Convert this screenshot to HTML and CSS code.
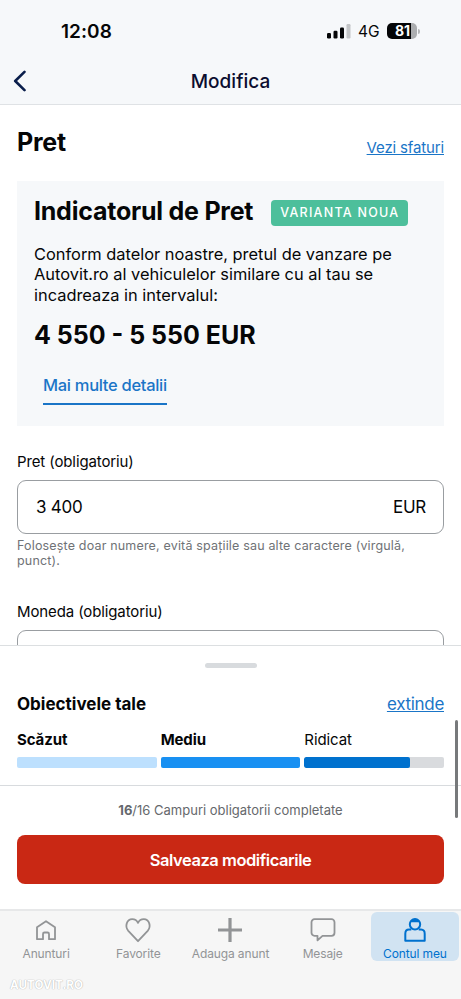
FILE: index.html
```html
<!DOCTYPE html>
<html lang="ro">
<head>
<meta charset="utf-8">
<title>Modifica</title>
<link rel="stylesheet" href="styles.css">
</head>
<body>
<div class="app">
  <header class="top">
    <div class="status">
      <span class="clock">12:08</span>
      <div class="indicators">
        <svg class="signal" width="24" height="16" viewBox="0 0 24 16">
          <rect x="0" y="10" width="4" height="5.5" rx="1.2"/>
          <rect x="6.5" y="7.8" width="4" height="7.7" rx="1.2"/>
          <rect x="13" y="4.5" width="4" height="11" rx="1.2"/>
          <rect class="dim" x="19.5" y="1" width="4" height="14.5" rx="1.2"/>
        </svg>
        <span class="network">4G</span>
        <span class="battery"><span class="level">81</span></span><span class="battery-tip"></span>
      </div>
    </div>
    <div class="navbar">
      <svg class="back" width="14" height="22" viewBox="0 0 14 22"><path d="M11.5 1.8 2.2 11l9.3 9.2"/></svg>
      <h1 class="title">Modifica</h1>
    </div>
  </header>

  <main class="content">
    <div class="section-head">
      <h2 class="heading">Pret</h2>
      <a class="tips">Vezi sfaturi</a>
    </div>
    <section class="card">
      <div class="card-head">
        <h2 class="heading">Indicatorul de Pret</h2>
        <span class="tag">VARIANTA NOUA</span>
      </div>
      <p class="copy">Conform datelor noastre, pretul de vanzare pe<br>Autovit.ro al vehiculelor similare cu al tau se<br>incadreaza in intervalul:</p>
      <p class="range">4 550 - 5 550 EUR</p>
      <a class="details">Mai multe detalii</a>
    </section>
    <div class="field">
      <label class="label">Pret (obligatoriu)</label>
      <div class="input"><span>3 400</span><span>EUR</span></div>
      <p class="hint">Folosește doar numere, evită spațiile sau alte caractere (virgulă,<br>punct).</p>
    </div>
    <div class="field">
      <label class="label">Moneda (obligatoriu)</label>
      <div class="input"></div>
    </div>
  </main>

  <section class="sheet">
    <div class="handle"></div>
    <div class="goals-head">
      <h3 class="goals-title">Obiectivele tale</h3>
      <a class="expand">extinde</a>
    </div>
    <div class="goals">
      <div class="goal"><b>Scăzut</b><div class="bar low"></div></div>
      <div class="goal"><b>Mediu</b><div class="bar mid"></div></div>
      <div class="goal"><span>Ridicat</span><div class="bar rest"><div class="fill" style="width:75.3%"></div></div></div>
    </div>
  </section>

  <section class="submit">
    <p class="count"><b>16</b>/16 Campuri obligatorii completate</p>
    <button class="save">Salveaza modificarile</button>
  </section>

  <nav class="tabs">
    <div class="tab">
      <svg width="28" height="28" viewBox="0 0 28 28"><path d="M5 11.200 14 5.200l9 6v12H17v-5.200a1.500 1.500 0 0 0-1.500-1.500h-3a1.500 1.500 0 0 0-1.500 1.500v5.200H5z"/></svg>
      <span>Anunturi</span>
    </div>
    <div class="tab">
      <svg width="28" height="28" viewBox="0 0 28 28"><path d="M14 25.200 4.300 14.800C.5 10.500 2.700 3.200 8.200 3.200c2.600 0 4.700 1.300 5.800 3.700 1.100-2.400 3.200-3.700 5.800-3.700 5.500 0 7.700 7.300 3.900 11.600z"/></svg>
      <span>Favorite</span>
    </div>
    <div class="tab">
      <svg width="28" height="28" viewBox="0 0 28 28"><path class="thick" d="M14 2v24M2 14h24"/></svg>
      <span>Adauga anunt</span>
    </div>
    <div class="tab">
      <svg width="28" height="28" viewBox="0 0 28 28"><path d="M5.500 3.200h17a3 3 0 0 1 3 3v10.600a3 3 0 0 1-3 3h-9L8.500 24.300v-4.500h-3a3 3 0 0 1-3-3V6.200a3 3 0 0 1 3-3z"/></svg>
      <span>Mesaje</span>
    </div>
    <div class="tab active">
      <svg width="28" height="28" viewBox="0 0 28 28"><path class="hair" d="M8.800 6.200C9.800 4 11.500 2.800 14 2.800s4.200 1.200 5.200 3.400z"/><circle cx="14" cy="8.300" r="5.200"/><path d="M10.300 13.400H8c-2.600 0-3.700 1.900-3.700 4.300v7h19.400v-7c0-2.400-1.100-4.300-3.700-4.300h-2.300"/></svg>
      <span>Contul meu</span>
    </div>
  </nav>
  <div class="scrollbar"></div>
  <div class="brand">AUTOVIT.RO</div>
</div>
</body>
</html>
```
FILE: styles.css
```css
* { box-sizing: border-box; }
body, h1, h2, h3, p { margin: 0; }
body { background: #fff; color: #050607; font-family: Inter, "Liberation Sans", sans-serif; }
.app { position: relative; width: 461px; height: 999px; overflow: hidden; display: flex; flex-direction: column; }

.top { height: 105px; flex: none; background: #f6f8fa; border-bottom: 1px solid #dfe2e5; }
.status { height: 62px; display: flex; align-items: center; justify-content: space-between; padding: 0 41px 0 61px; }
.clock { font-size: 19px; font-weight: 600; letter-spacing: .05px; }
.indicators { display: flex; align-items: center; }
.signal { fill: #050607; }
.signal .dim { fill: #c3c5c7; }
.network { font-size: 15.500px; margin-left: 7px; width: 22px; white-space: nowrap; }
.battery { width: 30px; height: 16px; margin-left: 7px; border-radius: 5px; overflow: hidden; background: linear-gradient(90deg, #050607 81%, #acaeb0 81%); }
.level { display: block; width: 30px; padding-left: 1px; font-size: 14px; font-weight: 700; line-height: 16px; color: #fff; text-align: center; }
.battery-tip { width: 2px; height: 5px; margin-left: 1px; background: #b5b7b9; border-radius: 0 2px 2px 0; }
.navbar { height: 38px; display: grid; grid-template-columns: 34px 1fr 34px; align-items: center; }
.back { margin-left: 13px; fill: none; stroke: #0a1e4b; stroke-width: 2.600; stroke-linecap: round; stroke-linejoin: round; }
.title { text-align: center; font-size: 19px; font-weight: 500; letter-spacing: .05px; color: #0b0d2f; line-height: 24px; padding-top: 1px; }

.content { height: 540px; flex: none; overflow: hidden; padding: 0 17px; }
.section-head { height: 76px; display: flex; justify-content: space-between; align-items: flex-start; padding-top: 22px; }
.heading { font-size: 25px; line-height: 30px; font-weight: 700; white-space: nowrap; letter-spacing: -.23px; }
.tips { margin-top: 11px; font-size: 15px; line-height: 20px; letter-spacing: -.15px; color: #1a75c7; text-decoration: underline; }
.card { height: 245px; background: #f6f8fa; padding: 15px 17px; }
.card-head { display: flex; align-items: center; }
.tag { margin-left: 18px; margin-top: 3px; width: 137px; height: 26px; border-radius: 4px; background: #4dbf9b; color: #fff; font-size: 12.500px; line-height: 26px; letter-spacing: 1.250px; text-align: center; font-weight: 500; white-space: nowrap; }
.copy { margin-top: 18px; font-size: 16.400px; line-height: 20.400px; white-space: nowrap; }
.range { margin-top: 14px; font-size: 25px; line-height: 32px; font-weight: 700; white-space: nowrap; letter-spacing: 0; }
.details { display: inline-block; margin: 21px 0 0 9px; height: 33px; border-bottom: 2px solid #1a75c7; color: #1a75c7; font-size: 16.500px; line-height: 26px; font-weight: 500; letter-spacing: -.3px; white-space: nowrap; }
.field { margin-top: 26px; height: 124px; }
.label { display: block; font-size: 15px; line-height: 20px; letter-spacing: -.12px; }
.input { height: 54px; margin-top: 8px; border: 1px solid #999da1; border-radius: 9px; padding: 0 17px 0 18px; display: flex; align-items: center; justify-content: space-between; font-size: 17px; letter-spacing: -.25px; }
.hint { margin-top: 4px; font-size: 12.500px; line-height: 15px; letter-spacing: .17px; color: #6f7276; white-space: nowrap; }

.sheet { height: 140px; flex: none; border-top: 1px solid #dcdfe1; padding: 17px 17px 0; background: #fff; }
.handle { width: 52px; height: 5px; margin: 0 auto; border-radius: 3px; background: #d8dbde; }
.goals-head { margin-top: 24px; height: 24px; display: flex; justify-content: space-between; align-items: center; }
.goals-title { font-size: 17px; font-weight: 700; letter-spacing: 0; }
.expand { font-size: 17px; letter-spacing: -.3px; color: #1a75c7; text-decoration: underline; }
.goals { margin-top: 14px; display: grid; grid-template-columns: repeat(3, 1fr); gap: 4px; }
.goal { font-size: 15px; line-height: 20px; letter-spacing: -.1px; }
.bar { height: 11px; margin-top: 7px; border-radius: 2px; overflow: hidden; }
.low { background: #bde0fe; }
.mid { background: #1890f2; }
.rest { background: #d9dbde; }
.fill { height: 100%; background: #0071ce; border-radius: 2px; }

.submit { height: 124px; flex: none; border-top: 1px solid #d8dbde; padding: 15px 17px 0; background: #fff; }
.count { text-align: center; font-size: 13px; line-height: 18px; color: #65686c; letter-spacing: 0; }
.save { display: block; width: 100%; height: 49px; margin-top: 16px; padding: 1px 0 0; border: 0; border-radius: 8px; background: #c92814; color: #fff; font: 600 16.500px/48px Inter, "Liberation Sans", sans-serif; letter-spacing: -.45px; }

.tabs { flex: 1; display: grid; grid-template-columns: repeat(5, 1fr); background: #f6f6f6; border-top: 2px solid #e7e8e9; padding-top: 1px; }
.tab { height: 49px; display: flex; flex-direction: column; align-items: center; padding-top: 4px; color: #929496; font-size: 12px; line-height: 16px; letter-spacing: -.12px; white-space: nowrap; }
.tab span { margin-top: 2px; }
.tab svg { flex: none; fill: none; stroke: currentColor; stroke-width: 1.800; stroke-linejoin: round; }
.tab .thick { stroke-width: 3.200; }
.tab .hair { fill: currentColor; stroke: none; }
.active { margin: 0 2px; border-radius: 6px; background: #d1e3f2; color: #0071ce; }
.active svg { stroke-width: 2; }
.scrollbar { position: absolute; right: 3px; top: 720px; width: 3px; height: 98px; border-radius: 2px; background: #77797b; }
.brand { position: absolute; left: 10px; top: 978px; font-size: 11.700px; line-height: 14px; font-weight: 700; color: #fff; text-shadow: 0 0 1px #b0b0b0, 0 0 1px #c4c4c4; }
```
